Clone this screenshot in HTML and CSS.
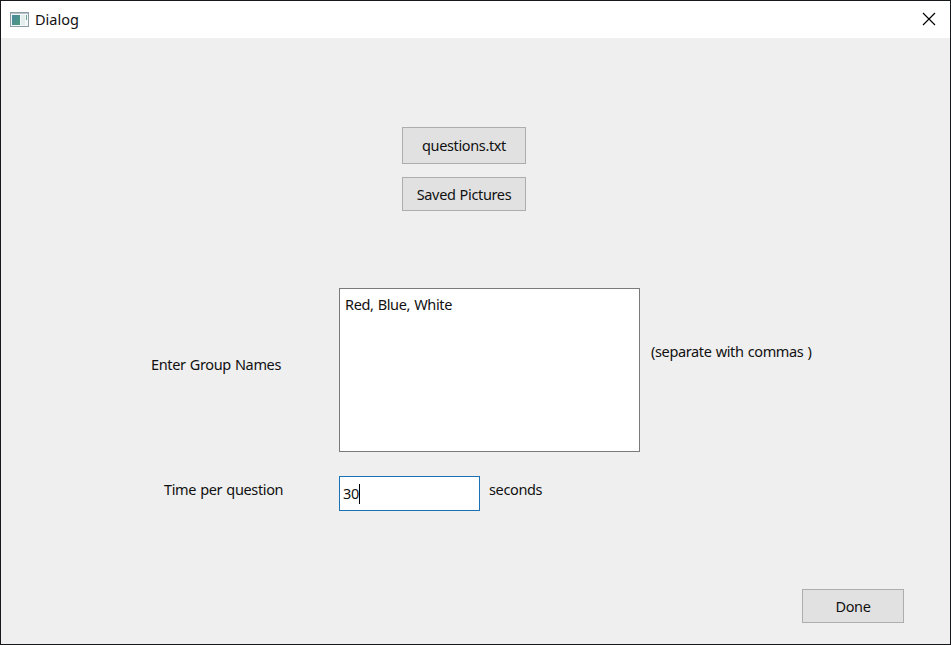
FILE: index.html
```html
<!DOCTYPE html>
<html lang="en">
<head>
<meta charset="utf-8">
<title>Dialog</title>
<link rel="stylesheet" href="styles.css">
</head>
<body>
<main class="dialog">
  <header class="titlebar">
    <svg class="app-icon" width="19" height="15" viewBox="0 0 19 15" aria-hidden="true">
      <defs><linearGradient id="pane" x1="0" y1="0" x2="1" y2="1"><stop offset="0" stop-color="#4b87a0"/><stop offset="1" stop-color="#4c9a7c"/></linearGradient></defs>
      <rect x=".5" y=".5" width="18" height="14" fill="#f5f8f8" stroke="#8e9da5"/>
      <path d="M1 1.5h17" stroke="#b4c3c9"/>
      <rect x="2" y="3" width="8" height="10" fill="url(#pane)"/>
      <rect x="11" y="3" width="4" height="10" fill="#e5ecec"/>
      <path d="M16.5 3v5" stroke="#6ba393"/>
    </svg>
    <span class="title">Dialog</span>
    <svg class="close" width="14" height="14" viewBox="0 0 14 14" aria-hidden="true"><path d="M1 1l12 12M13 1L1 13" stroke="#000" stroke-width="1.15"/></svg>
  </header>
  <section class="files">
    <button class="button questions"><span>questions.txt</span></button>
    <button class="button pictures"><span>Saved Pictures</span></button>
  </section>
  <section class="form">
    <div class="row groups">
      <span class="label"><span>Enter Group Names</span></span>
      <div class="textarea"><span>Red, Blue, White</span></div>
      <span class="hint"><span>(separate with commas )</span></span>
    </div>
    <div class="row time">
      <span class="label"><span>Time per question</span></span>
      <div class="input"><span>30</span><i class="caret"></i></div>
      <span class="unit"><span>seconds</span></span>
    </div>
  </section>
  <footer class="actions"><button class="button done"><span>Done</span></button></footer>
</main>
</body>
</html>
```
FILE: styles.css
```css
* { box-sizing: border-box; }
body { margin: 0; }
.dialog {
  width: 951px;
  height: 645px;
  border: 1px solid #16171b;
  background: #efefef;
  color: #111;
  font: 14.5px/20px "Noto Sans", "Open Sans", sans-serif;
  letter-spacing: -0.36px;
  word-spacing: 0.7px;
  white-space: nowrap;
  display: flex;
  flex-direction: column;
}
.titlebar {
  height: 37px;
  flex: none;
  background: #fff;
  display: flex;
  align-items: center;
  padding: 0 14px 0 9px;
}
.title { margin-left: 6px; padding-bottom: 2px; letter-spacing: 0; }
.close { margin: 0 0 1px auto; }
.files {
  margin: 89px 0 0 401px;
  width: 124px;
  display: flex;
  flex-direction: column;
  gap: 13px;
}
.button {
  display: flex;
  align-items: center;
  justify-content: center;
  padding: 0;
  height: 34px;
  border: 1px solid #adadad;
  background: #e1e1e1;
  color: inherit;
  font: inherit;
  letter-spacing: inherit;
  word-spacing: inherit;
}
.questions { height: 37px; padding-bottom: 1px; }
.form {
  margin-top: 77px;
  display: flex;
  flex-direction: column;
  gap: 24px;
}
.row { display: flex; }
.label { width: 338px; flex: none; }
.groups .label { padding: 66px 0 0 150px; }
.time .label { padding: 3px 0 0 163px; }
.textarea {
  width: 301px;
  height: 164px;
  border: 1px solid #7a7a7a;
  background: #fff;
  padding: 5px;
}
.hint { padding: 53px 0 0 11px; }
.input {
  width: 141px;
  height: 35px;
  border: 1px solid #1a72b5;
  background: #fff;
  display: flex;
  align-items: center;
  padding-left: 3px;
}
.input span { padding-bottom: 2px; }
.caret { width: 1px; height: 20px; background: #000; }
.unit { padding: 3px 0 0 9px; }
.actions {
  margin: auto 46px 21px 0;
  display: flex;
  justify-content: flex-end;
}
.done { width: 102px; }
```
